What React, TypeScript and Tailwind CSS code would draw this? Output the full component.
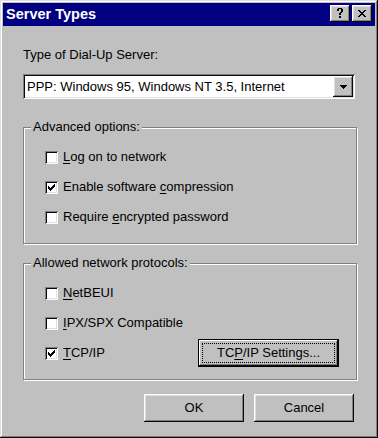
import type { ReactNode } from "react";

const raised =
  "shadow-[inset_-1px_-1px_0_#0a0a0a,inset_1px_1px_0_#ffffff,inset_-2px_-2px_0_#808080,inset_2px_2px_0_#dfdfdf]";

function CheckBox({ checked, children }: { checked?: boolean; children: ReactNode }) {
  return (
    <label className="flex h-[30px] items-center gap-[5px]">
      <span className="flex h-[13px] w-[13px] shrink-0 items-center justify-center bg-white shadow-[inset_1px_1px_0_#808080,inset_-1px_-1px_0_#ffffff,inset_2px_2px_0_#0a0a0a,inset_-2px_-2px_0_#dfdfdf]">
        {checked && (
          <svg width="7" height="7" viewBox="0 0 7 7" shapeRendering="crispEdges">
            <path
              d="M6 0h1v1h-1zM5 1h2v1h-2zM0 2h1v1h-1zM4 2h3v1h-3zM0 3h2v1h-2zM3 3h3v1h-3zM0 4h5v1h-5zM1 5h3v1h-3zM2 6h1v1h-1z"
              fill="#000"
            />
          </svg>
        )}
      </span>
      <span>{children}</span>
    </label>
  );
}

function Group({ title, children }: { title: string; children: ReactNode }) {
  return (
    <fieldset className="border border-[#808080] px-[7px] pb-[11px] pt-[7px] shadow-[inset_1px_1px_0_#ffffff,1px_1px_0_#ffffff]">
      <legend className="bg-[#c0c0c0] px-[2px] leading-[16px]">{title}</legend>
      <div className="flex flex-col pl-[14px]">{children}</div>
    </fieldset>
  );
}

const U = ({ children }: { children: ReactNode }) => (
  <span className="underline decoration-1 underline-offset-[2px]">{children}</span>
);

export default function App() {
  return (
    <div className="flex h-[438px] w-[378px] flex-col bg-[#c0c0c0] p-[3px] font-['Liberation_Sans',Arial,sans-serif] text-[13px] leading-[16px] text-black shadow-[inset_-1px_-1px_0_#0a0a0a,inset_1px_1px_0_#dfdfdf,inset_-2px_-2px_0_#808080,inset_2px_2px_0_#ffffff]">
      {/* title bar */}
      <div className="flex h-[23px] items-start justify-between bg-[#000080] pl-[3px] pr-[3px]">
        <span className="mt-[3px] text-[14.5px] font-bold leading-[17px] text-white">Server Types</span>
        <div className="mt-[2px] flex gap-[2px]">
          <button className={`flex h-[17px] w-[20px] items-center justify-center bg-[#c0c0c0] ${raised}`}>
            <svg width="8" height="11" viewBox="0 0 8 11" shapeRendering="crispEdges">
              <path
                d="M2 0h4v1h-4zM1 1h2v2h-2zM5 1h2v3h-2zM4 4h2v1h-2zM3 5h2v2h-2zM3 8h2v2h-2z"
                fill="#000"
              />
            </svg>
          </button>
          <button className={`flex h-[17px] w-[20px] items-center justify-center bg-[#c0c0c0] ${raised}`}>
            <svg width="8" height="7" viewBox="0 0 8 7" shapeRendering="crispEdges">
              <path
                d="M0 0h2v1h-2zM6 0h2v1h-2zM1 1h2v1h-2zM5 1h2v1h-2zM2 2h4v1h-4zM3 3h2v1h-2zM2 4h4v1h-4zM1 5h2v1h-2zM5 5h2v1h-2zM0 6h2v1h-2zM6 6h2v1h-2z"
                fill="#000"
              />
            </svg>
          </button>
        </div>
      </div>

      {/* body */}
      <div className="flex flex-col pl-[20px] pr-[18px]">
        <div className="mt-[21px]">Type of Dial-Up Server:</div>

        <div className="mt-[11px] flex h-[25px] w-[332px] items-center bg-white p-[2px] shadow-[inset_1px_1px_0_#808080,inset_-1px_-1px_0_#ffffff,inset_2px_2px_0_#0a0a0a,inset_-2px_-2px_0_#dfdfdf]">
          <span className="flex-1 pl-[2px]">PPP: Windows 95, Windows NT 3.5, Internet</span>
          <span className={`flex h-[21px] w-[20px] items-center justify-center bg-[#c0c0c0] ${raised}`}>
            <svg width="7" height="4" viewBox="0 0 7 4" shapeRendering="crispEdges">
              <path d="M0 0h7v1h-7zM1 1h5v1h-5zM2 2h3v1h-3zM3 3h1v1h-1z" fill="#000" />
            </svg>
          </span>
        </div>

        <div className="mt-[20px]">
          <Group title="Advanced options:">
            <CheckBox>
              <U>L</U>og on to network
            </CheckBox>
            <CheckBox checked>
              Enable software <U>c</U>ompression
            </CheckBox>
            <CheckBox>
              Require <U>e</U>ncrypted password
            </CheckBox>
          </Group>
        </div>

        <div className="mt-[11px]">
          <Group title="Allowed network protocols:">
            <CheckBox>
              <U>N</U>etBEUI
            </CheckBox>
            <CheckBox>
              <U>I</U>PX/SPX Compatible
            </CheckBox>
            <div className="flex items-center justify-between pr-[10px]">
              <CheckBox checked>
                <U>T</U>CP/IP
              </CheckBox>
              <button className="flex h-[28px] w-[141px] items-center justify-center border border-black bg-[#c0c0c0] p-[3px] shadow-[inset_-1px_-1px_0_#0a0a0a,inset_1px_1px_0_#ffffff,inset_-2px_-2px_0_#808080]">
                <span className="flex h-full w-full items-center justify-center border border-dotted border-black">
                  TC<U>P</U>/IP Settings...
                </span>
              </button>
            </div>
          </Group>
        </div>

        <div className="mt-[14px] flex justify-end gap-[10px] pr-[3px]">
          <button className={`h-[28px] w-[100px] bg-[#c0c0c0] ${raised}`}>OK</button>
          <button className={`h-[28px] w-[100px] bg-[#c0c0c0] ${raised}`}>Cancel</button>
        </div>
      </div>
    </div>
  );
}
